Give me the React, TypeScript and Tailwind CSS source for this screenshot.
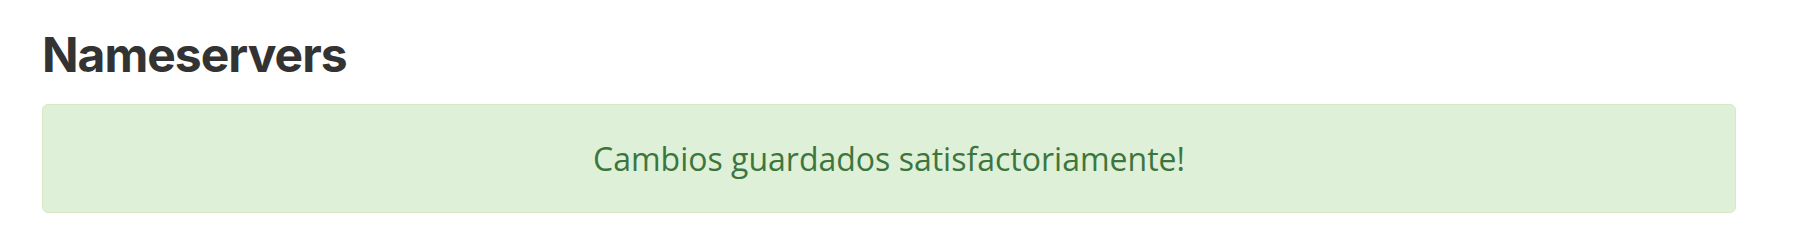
export default function App() {
  return (
    <div className="min-h-[238px] w-full bg-white pl-[42px] pr-[62px] pt-[29px]">
      <h1 className="mb-[23px] font-['Inter',sans-serif] text-[48px] font-bold leading-[52px] tracking-[-1px] text-[#333333]">
        Nameservers
      </h1>
      <div className="flex h-[109px] items-center justify-center rounded-[6px] border border-[#d6e9c6] bg-[#dff0d8]">
        <p className="font-['Open_Sans',sans-serif] text-[32px] text-[#3c763d]">
          Cambios guardados satisfactoriamente!
        </p>
      </div>
    </div>
  );
}
